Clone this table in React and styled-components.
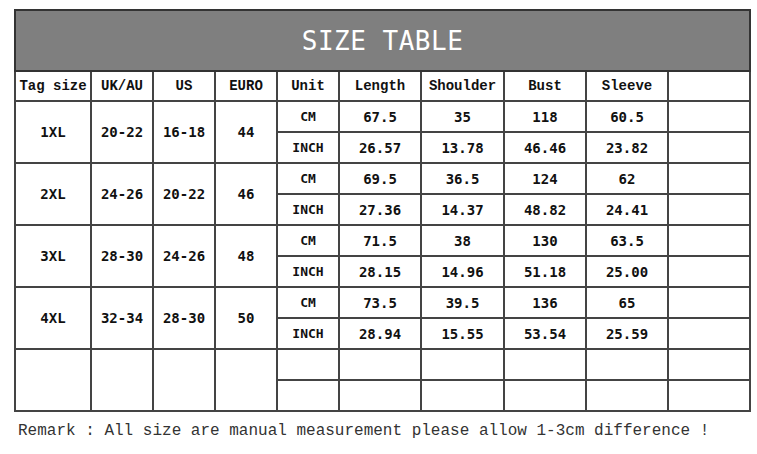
import React from "react";
import styled, { createGlobalStyle } from "styled-components";

const GlobalStyle = createGlobalStyle`
  html, body {
    margin: 0;
    padding: 0;
    background: #ffffff;
  }
`;

const Page = styled.div`
  padding: 9px 0 0 14px;
  width: 757px;
  height: 454px;
  box-sizing: border-box;
  overflow: hidden;
`;

const Table = styled.table`
  border-collapse: collapse;
  table-layout: fixed;
  width: 736px;
  border: 2px solid #333;
`;

const TitleCell = styled.th`
  height: 59px;
  padding: 0;
  background: #7f7f7f;
  color: #ffffff;
  font-family: "DejaVu Sans Mono", monospace;
  font-weight: 400;
  font-size: 26px;
  letter-spacing: 0.5px;
  text-align: center;
  border: 2px solid #333;
`;

const HeadCell = styled.th`
  height: 28px;
  padding: 0;
  font-family: "Liberation Mono", monospace;
  font-weight: 700;
  font-size: 14px;
  color: #111;
  text-align: center;
  white-space: nowrap;
  border: 2px solid #444;
`;

const Cell = styled.td`
  height: 29px;
  padding: 0;
  font-family: "DejaVu Sans Mono", monospace;
  font-weight: 700;
  font-size: ${(p) => (p.$unit ? "13px" : "14px")};
  color: #111;
  text-align: center;
  white-space: nowrap;
  border: 2px solid #444;
`;

const Remark = styled.p`
  margin: 9px 0 0 4px;
  font-family: "Liberation Mono", monospace;
  font-size: 16px;
  line-height: 20px;
  color: #333;
  white-space: nowrap;
`;

const widths = [76, 62, 62, 62, 62, 82, 83, 82, 82, 82];
const heads = ["Tag size", "UK/AU", "US", "EURO", "Unit", "Length", "Shoulder", "Bust", "Sleeve", ""];

const sizes = [
  { tag: "1XL", uk: "20-22", us: "16-18", euro: "44", cm: ["67.5", "35", "118", "60.5"], inch: ["26.57", "13.78", "46.46", "23.82"] },
  { tag: "2XL", uk: "24-26", us: "20-22", euro: "46", cm: ["69.5", "36.5", "124", "62"], inch: ["27.36", "14.37", "48.82", "24.41"] },
  { tag: "3XL", uk: "28-30", us: "24-26", euro: "48", cm: ["71.5", "38", "130", "63.5"], inch: ["28.15", "14.96", "51.18", "25.00"] },
  { tag: "4XL", uk: "32-34", us: "28-30", euro: "50", cm: ["73.5", "39.5", "136", "65"], inch: ["28.94", "15.55", "53.54", "25.59"] },
  { tag: "", uk: "", us: "", euro: "", cm: ["", "", "", ""], inch: ["", "", "", ""], blank: true },
];

export default function App() {
  return (
    <Page>
      <GlobalStyle />
      <Table>
        <colgroup>
          {widths.map((w, i) => (
            <col key={i} style={{ width: w }} />
          ))}
        </colgroup>
        <thead>
          <tr>
            <TitleCell colSpan={10}>SIZE TABLE</TitleCell>
          </tr>
          <tr>
            {heads.map((h, i) => (
              <HeadCell key={i}>{h}</HeadCell>
            ))}
          </tr>
        </thead>
        <tbody>
          {sizes.map((s, i) => (
            <React.Fragment key={i}>
              <tr>
                <Cell rowSpan={2}>{s.tag}</Cell>
                <Cell rowSpan={2}>{s.uk}</Cell>
                <Cell rowSpan={2}>{s.us}</Cell>
                <Cell rowSpan={2}>{s.euro}</Cell>
                <Cell $unit>{s.blank ? "" : "CM"}</Cell>
                {s.cm.map((v, j) => (
                  <Cell key={j}>{v}</Cell>
                ))}
                <Cell />
              </tr>
              <tr>
                <Cell $unit>{s.blank ? "" : "INCH"}</Cell>
                {s.inch.map((v, j) => (
                  <Cell key={j}>{v}</Cell>
                ))}
                <Cell />
              </tr>
            </React.Fragment>
          ))}
        </tbody>
      </Table>
      <Remark>Remark : All size are manual measurement please allow 1-3cm difference !</Remark>
    </Page>
  );
}
